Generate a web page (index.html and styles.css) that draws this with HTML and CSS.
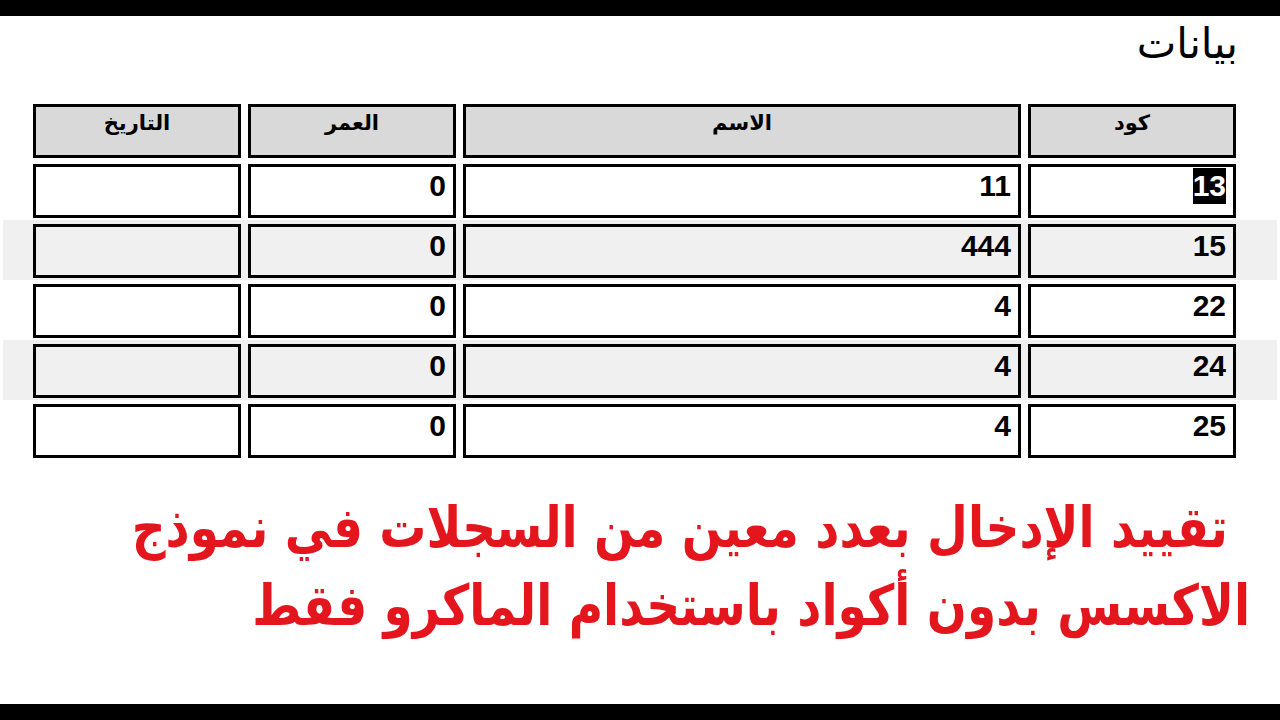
FILE: index.html
```html
<!DOCTYPE html>
<html lang="ar">
<head>
<meta charset="utf-8">
<title>بيانات</title>
<link rel="stylesheet" href="styles.css">
</head>
<body>
<div class="screen">
  <div class="bar"></div>
  <main class="content" dir="rtl">
    <header class="title-area">
      <h1 class="title">بيانات</h1>
    </header>
    <section class="sheet">
      <div class="row head">
        <div class="cell">كود</div>
        <div class="cell">الاسم</div>
        <div class="cell">العمر</div>
        <div class="cell">التاريخ</div>
      </div>
      <div class="row">
        <div class="cell"><span class="selected">13</span></div>
        <div class="cell">11</div>
        <div class="cell">0</div>
        <div class="cell"></div>
      </div>
      <div class="row alt">
        <div class="cell">15</div>
        <div class="cell">444</div>
        <div class="cell">0</div>
        <div class="cell"></div>
      </div>
      <div class="row">
        <div class="cell">22</div>
        <div class="cell">4</div>
        <div class="cell">0</div>
        <div class="cell"></div>
      </div>
      <div class="row alt">
        <div class="cell">24</div>
        <div class="cell">4</div>
        <div class="cell">0</div>
        <div class="cell"></div>
      </div>
      <div class="row">
        <div class="cell">25</div>
        <div class="cell">4</div>
        <div class="cell">0</div>
        <div class="cell"></div>
      </div>
    </section>
    <p class="caption">
      <span class="line line-1">تقييد الإدخال بعدد معين من السجلات في نموذج</span>
      <span class="line line-2">الاكسس بدون أكواد باستخدام الماكرو فقط</span>
    </p>
  </main>
  <div class="bar"></div>
</div>
</body>
</html>
```

FILE: styles.css
```css
* {
  box-sizing: border-box;
}

html, body {
  margin: 0;
  padding: 0;
  background: #ffffff;
}

body {
  font-family: "Liberation Sans", "DejaVu Sans", sans-serif;
  color: #000000;
}

.screen {
  width: 1280px;
  height: 720px;
  display: flex;
  flex-direction: column;
  overflow: hidden;
}

.bar {
  height: 16px;
  flex: 0 0 16px;
  background: #000000;
}

.content {
  flex: 1 1 auto;
  display: flex;
  flex-direction: column;
  background: #ffffff;
}

.title-area {
  height: 84px;
  flex: 0 0 84px;
  padding: 5px 42px 0 0;
}

.title {
  margin: 0;
  font-family: "DejaVu Sans", sans-serif;
  font-weight: normal;
  font-size: 42px;
  line-height: 46px;
}

.sheet {
  display: flex;
  flex-direction: column;
}

.row {
  height: 60px;
  margin: 0 3px;
  padding: 4px 41px 2px 30px;
  display: grid;
  grid-template-columns: 208px 558px 208px 208px;
  column-gap: 7px;
}

.row.alt {
  background: #f0f0f0;
}

.cell {
  height: 54px;
  border: 3px solid #000000;
  background: #ffffff;
  padding: 1px 7px 0 7px;
  font-size: 30px;
  font-weight: bold;
  line-height: 35px;
  text-align: right;
  white-space: nowrap;
}

.row.alt .cell {
  background: #f0f0f0;
}

.row.head .cell {
  background: #d9d9d9;
  text-align: center;
  font-family: "DejaVu Sans", sans-serif;
  font-size: 21px;
  line-height: 32px;
  padding-top: 0;
}

.selected {
  background: #000000;
  color: #ffffff;
  padding: 1px 0 2px;
}

.caption {
  margin: 0;
  padding: 32px 30px 0 0;
  color: #e3161d;
  font-family: "DejaVu Sans", sans-serif;
  font-weight: bold;
  font-size: 47px;
  line-height: 78px;
  text-align: right;
}

.line {
  display: block;
  white-space: nowrap;
  transform: scaleY(1.2);
  transform-origin: 100% 55px;
}

.line-1 {
  padding-right: 22px;
}
```
